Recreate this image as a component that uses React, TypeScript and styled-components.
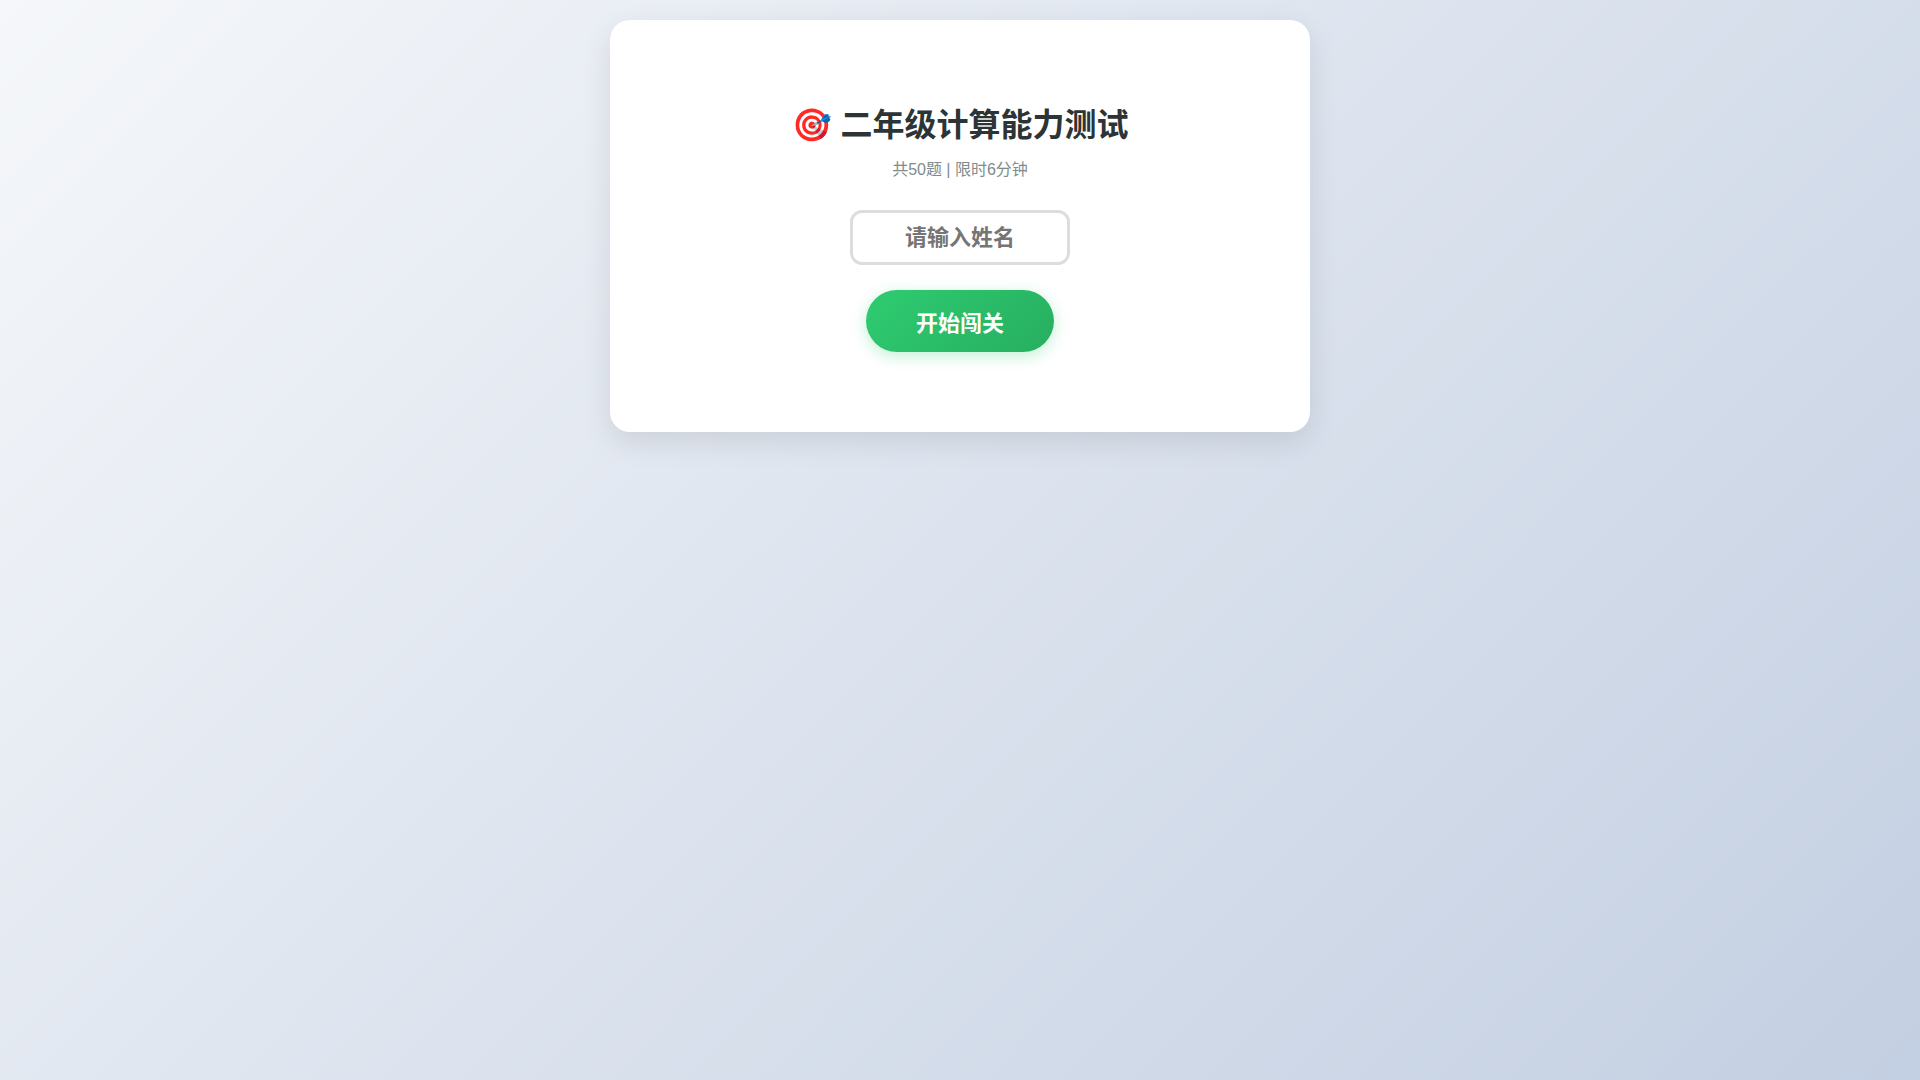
import React from "react";
import styled, { createGlobalStyle } from "styled-components";

const Global = createGlobalStyle`
  html, body { margin: 0; padding: 0; }
  body {
    min-height: 1080px;
    font-family: "Liberation Sans", "Noto Sans CJK SC", sans-serif;
    line-height: 1.6;
    background: linear-gradient(135deg, #f5f7fa 0%, #c3cfe2 100%);
    overflow: hidden;
  }
`;

const Page = styled.main`
  display: flex;
  justify-content: center;
  padding: 20px;
`;

const Card = styled.section`
  box-sizing: border-box;
  width: 700px;
  padding: 40px;
  background: #fff;
  border-radius: 20px;
  box-shadow: 0 10px 30px rgba(0, 0, 0, 0.1);
  text-align: center;
`;

const Intro = styled.div`
  padding: 20px 0 40px;
`;

const Title = styled.h1`
  margin: 20px 0 5px;
  font-size: 32px;
  font-weight: 700;
  color: #2d3436;
`;

const Subtitle = styled.p`
  margin: 0 0 28px;
  padding-top: 1px;
  height: 25px;
  font-size: 16px;
  color: #7f8c8d;
`;

const NameInput = styled.input`
  display: block;
  box-sizing: border-box;
  width: 220px;
  height: 55px;
  margin: 0 auto 25px;
  padding: 12px;
  border: 3px solid #ddd;
  border-radius: 12px;
  outline: none;
  background: #fff;
  font-family: inherit;
  font-size: 22px;
  font-weight: 700;
  text-align: center;
  &::placeholder { color: #757575; opacity: 1; }
`;

const StartButton = styled.button`
  display: block;
  box-sizing: border-box;
  width: 188px;
  height: 62px;
  margin: 0 auto;
  border: none;
  border-radius: 50px;
  background: linear-gradient(135deg, #2ecc71, #27ae60);
  box-shadow: 0 4px 15px rgba(46, 204, 113, 0.3);
  color: #fff;
  font-family: inherit;
  font-size: 22px;
  font-weight: 700;
`;

export default function App() {
  return (
    <>
      <Global />
      <Page>
        <Card>
          <Intro>
            <Title>🎯 二年级计算能力测试</Title>
            <Subtitle>共50题 | 限时6分钟</Subtitle>
            <NameInput placeholder="请输入姓名" />
            <StartButton>开始闯关</StartButton>
          </Intro>
        </Card>
      </Page>
    </>
  );
}
